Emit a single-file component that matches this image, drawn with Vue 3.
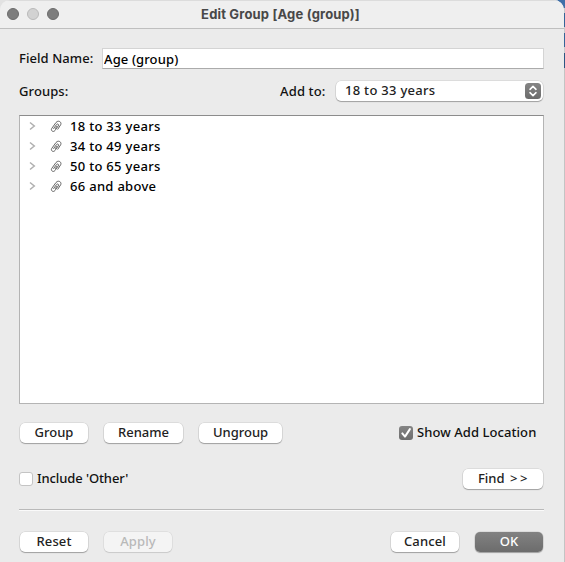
<script setup>
import { ref } from 'vue'

const fieldName = ref('Age (group)')
const groups = ['18 to 33 years', '34 to 49 years', '50 to 65 years', '66 and above']
</script>

<template>
  <div class="desktop">
    <div class="window">
      <header class="titlebar">
        <div class="lights">
          <i class="light"></i>
          <i class="light pale"></i>
          <i class="light"></i>
        </div>
        <h1 class="title"><span>Edit Group [Age (group)]</span></h1>
      </header>

      <main class="content">
        <div class="row name-row">
          <span class="label field-label">Field Name:</span>
          <input v-model="fieldName" class="name-input" type="text" />
        </div>

        <div class="row target-row">
          <span class="label groups-label">Groups:</span>
          <span class="label add-label">Add to:</span>
          <div class="select">
            <span class="select-text">18 to 33 years</span>
            <span class="stepper">
              <svg width="16" height="16" viewBox="0 0 16 16">
                <path d="M5 6.300 8 3.400l3 2.900M5 9.700l3 2.900 3-2.900" />
              </svg>
            </span>
          </div>
        </div>

        <ul class="list">
          <li v-for="group in groups" :key="group" class="item">
            <svg class="chevron" width="7" height="10" viewBox="0 0 7 10">
              <path d="M1 1.500 5.300 5 1 8.500" />
            </svg>
            <svg class="clip" width="12" height="13" viewBox="0 0 12 13">
              <path d="M3.400 8.800 6.400 4.700C7.500 3.200 9.300 4.400 8.300 5.900L4.900 10.600C3.400 12.600.4 10.700 1.700 8.500L6 2.500C8.200-.3 12.200 2 10.600 4.900L7.600 9.500M5 8.900 7.100 6" />
            </svg>
            <span class="item-text">{{ group }}</span>
          </li>
        </ul>

        <div class="row actions">
          <button class="btn group"><span>Group</span></button>
          <button class="btn rename"><span>Rename</span></button>
          <button class="btn ungroup"><span>Ungroup</span></button>
          <label class="check show">
            <span class="box checked">
              <svg width="14" height="14" viewBox="0 0 14 14"><path d="m3.300 7.400 2.700 3.200 4.900-7.500" /></svg>
            </span>
            <span class="check-text">Show Add Location</span>
          </label>
        </div>

        <div class="row options">
          <label class="check">
            <span class="box"></span>
            <span class="check-text include">Include 'Other'</span>
          </label>
          <button class="btn find"><span>Find <span class="arrows">&gt;&gt;</span></span></button>
        </div>

        <div class="separator"></div>

        <footer class="row footer">
          <button class="btn reset"><span>Reset</span></button>
          <button class="btn apply" disabled><span>Apply</span></button>
          <button class="btn cancel"><span>Cancel</span></button>
          <button class="btn ok"><span>OK</span></button>
        </footer>
      </main>
    </div>
  </div>
</template>

<style>
body {
  margin: 0;
  overflow: hidden;
}
</style>

<style scoped>
.desktop {
  width: 565px;
  height: 562px;
  background:
    linear-gradient(#e2e2e2, #e2e2e2) 0 0 / 20px 20px no-repeat,
    linear-gradient(#3f6fa8 0 8px, #c5c9cd 8px 13px, #356498 13px 27px, #c5c9cd 27px 33px, #356498 33px 47px, #c5c9cd 47px 53px, #2c5683 53px 68px, #c4c4c4 68px);
  font-family: "Noto Sans", "Liberation Sans", sans-serif;
  font-size: 13px;
  font-weight: 500;
  line-height: 20px;
  color: #111;
}
.window {
  box-sizing: border-box;
  width: 564px;
  height: 562px;
  background: #ebebeb;
  border-radius: 10px 10px 0 0;
  overflow: hidden;
}
.titlebar {
  box-sizing: border-box;
  display: flex;
  align-items: center;
  height: 29px;
  padding: 0 7px 2px;
  background: #efefef;
  border-top: 1px solid #dcdcdc;
  border-bottom: 1px solid #bfbfbf;
}
.lights {
  display: flex;
  gap: 8px;
}
.light {
  box-sizing: border-box;
  width: 12px;
  height: 12px;
  border: 1px solid #6c6c6c;
  border-radius: 50%;
  background: #7d7d7d;
}
.light.pale {
  border-color: #b9b9b9;
  background: #d2d2d2;
}
.title {
  flex: 1;
  margin: 0;
  padding-right: 55px;
  text-align: center;
  font: 700 13px/20px Inter, "Liberation Sans", sans-serif;
  letter-spacing: 0.17px;
  color: #484848;
}
.content {
  display: flex;
  flex-direction: column;
  padding: 19px 20px 0 19px;
}
.row {
  display: flex;
  align-items: center;
}
.name-row {
  height: 21px;
}
.field-label {
  width: 83px;
  margin-top: -2px;
  letter-spacing: 0.06px;
}
.label {
  white-space: nowrap;
}
.name-input {
  box-sizing: border-box;
  flex: 1;
  min-width: 0;
  height: 21px;
  padding: 0 1px;
  border: 1px solid #d4d4d4;
  border-bottom-color: #ababab;
  border-radius: 0;
  outline: none;
  background: #fff;
  font: inherit;
  letter-spacing: 0.12px;
  color: #000;
}
.target-row {
  height: 20px;
  margin-top: 12px;
}
.groups-label {
  width: 261px;
  letter-spacing: 0.1px;
}
.add-label {
  width: 56px;
  letter-spacing: 0.15px;
}
.select {
  box-sizing: border-box;
  display: flex;
  align-items: center;
  justify-content: space-between;
  width: 207px;
  height: 20px;
  padding: 0 2px 0 9px;
  border-radius: 5px;
  background: #fff;
  box-shadow: 0 0 0 0.5px #00000020, 0 1px 1px #00000045;
  color: #222;
}
.select-text {
  margin-top: -2px;
  letter-spacing: 0.29px;
}
.stepper {
  display: flex;
  border-radius: 3.5px;
  background: linear-gradient(#858585, #6b6b6b);
}
.stepper path {
  fill: none;
  stroke: #fff;
  stroke-width: 1.6;
  stroke-linecap: round;
  stroke-linejoin: round;
}
.list {
  box-sizing: border-box;
  height: 289px;
  margin: 14px 0 0;
  padding: 0 0 0 9px;
  border: 1px solid #b4b4b4;
  border-top-color: #8c8c8c;
  background: #fff;
  list-style: none;
  color: #000;
}
.item {
  display: flex;
  align-items: center;
  height: 20px;
}
.chevron path {
  fill: none;
  stroke: #b0b0b0;
  stroke-width: 1.5;
}
.clip {
  margin: 0 8px 0 14px;
}
.clip path {
  fill: none;
  stroke: #555;
  stroke-width: 0.9;
}
.item-text {
  letter-spacing: 0.3px;
}
.actions {
  height: 20px;
  margin-top: 19px;
  padding-left: 1px;
}
.btn {
  width: 68px;
  height: 20px;
  padding: 0 0 2px;
  border: 0;
  border-radius: 5px;
  background: #fff;
  box-shadow: 0 0 0 0.5px #00000020, 0 1px 1px #00000045;
  font: inherit;
  line-height: 18px;
  color: #222;
  white-space: nowrap;
}
.btn.rename {
  width: 79px;
  margin-left: 16px;
}
.btn.ungroup {
  width: 83px;
  margin-left: 16px;
}
.check {
  display: flex;
  align-items: center;
  gap: 4px;
  white-space: nowrap;
}
.check-text {
  margin-top: -2px;
  letter-spacing: 0.07px;
}
.check-text.include {
  letter-spacing: -0.1px;
}
.show {
  margin-left: 117px;
}
.box {
  box-sizing: border-box;
  width: 14px;
  height: 14px;
  margin-top: -1px;
  border: 1px solid #c4c4c4;
  border-radius: 3px;
  background: #fff;
}
.box.checked {
  border: 0;
  background: linear-gradient(#858585, #6d6d6d);
}
.box svg {
  display: block;
}
.box path {
  fill: none;
  stroke: #fff;
  stroke-width: 2;
  stroke-linecap: round;
  stroke-linejoin: round;
}
.options {
  height: 20px;
  margin-top: 26px;
  justify-content: space-between;
}
.btn.find {
  width: 80px;
  margin-right: 1px;
}
.arrows {
  margin-left: 2px;
  letter-spacing: 2.6px;
  margin-right: -2px;
}
.separator {
  height: 1px;
  margin-top: 20px;
  background: #b9b9b9;
  border-bottom: 1px solid #fafafa;
}
.footer {
  height: 20px;
  margin-top: 21px;
  padding: 0 1px;
}
.btn.apply {
  margin-left: 16px;
  background: #f4f4f4;
  box-shadow: 0 0 0 0.5px #00000018, 0 1px 1px #00000018;
  color: #b9b9b9;
}
.btn.reset,
.btn.apply {
  letter-spacing: 0.1px;
}
.btn.cancel {
  margin-left: auto;
  letter-spacing: 0.15px;
}
.btn.ok {
  margin-left: 16px;
  background: linear-gradient(#828282, #6c6c6c);
  color: #fff;
}
</style>
